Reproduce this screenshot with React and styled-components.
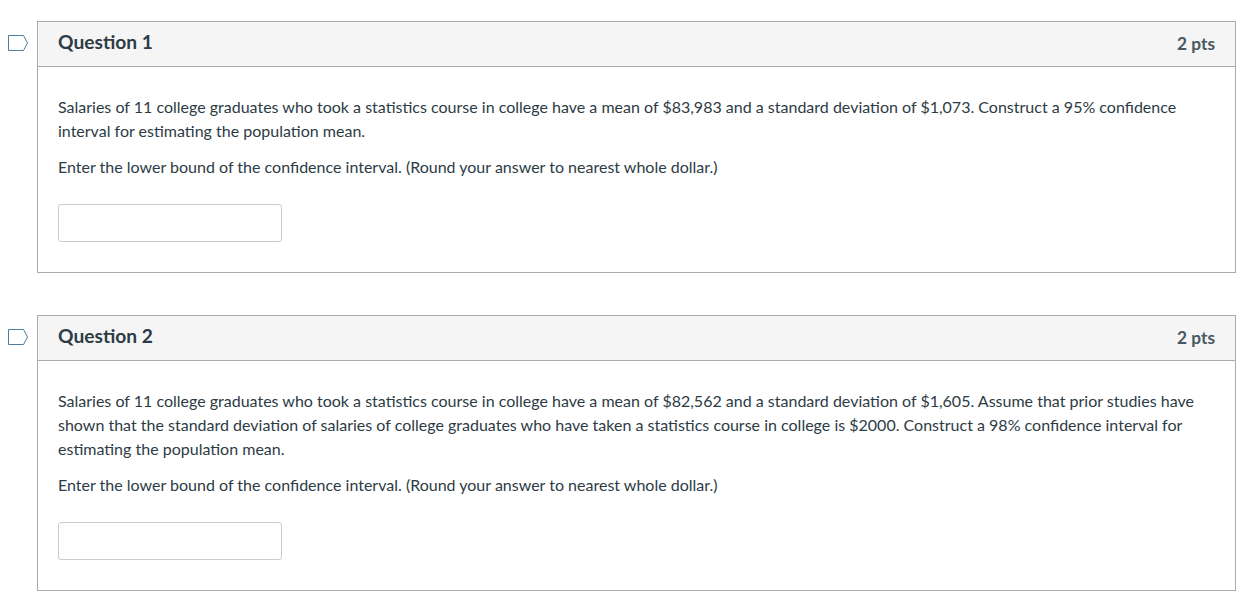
import styled, { createGlobalStyle } from "styled-components";

const questions = [
  {
    title: "Question 1",
    points: "2 pts",
    text: "Salaries of 11 college graduates who took a statistics course in college have a mean of $83,983 and a standard deviation of $1,073. Construct a 95% confidence interval for estimating the population mean.",
  },
  {
    title: "Question 2",
    points: "2 pts",
    text: "Salaries of 11 college graduates who took a statistics course in college have a mean of $82,562 and a standard deviation of $1,605. Assume that prior studies have shown that the standard deviation of salaries of college graduates who have taken a statistics course in college is $2000. Construct a 98% confidence interval for estimating the population mean.",
  },
];

function Flag() {
  return (
    <FlagIcon width="20" height="16" viewBox="0 0 20 16">
      <path d="M0.5 0.5H15.5L19.5 8L15.5 15.5H0.5Z" fill="none" stroke="#4b7f9c" />
    </FlagIcon>
  );
}

export default function App() {
  return (
    <>
      <GlobalStyle />
      <Page>
        {questions.map((q) => (
          <Row key={q.title}>
            <FlagCol>
              <Flag />
            </FlagCol>
            <Card>
              <Header>
                <Title>{q.title}</Title>
                <Points>{q.points}</Points>
              </Header>
              <Body>
                <Para>{q.text}</Para>
                <Para>
                  Enter the lower bound of the confidence interval. (Round your
                  answer to nearest whole dollar.)
                </Para>
                <Answer type="text" />
              </Body>
            </Card>
          </Row>
        ))}
      </Page>
    </>
  );
}

const GlobalStyle = createGlobalStyle`
  html, body {
    margin: 0;
    padding: 0;
    background: #fff;
    font-family: Lato, "Liberation Sans", sans-serif;
    color: #2d3b45;
  }
`;

const Page = styled.div`
  display: flex;
  flex-direction: column;
  gap: 42px;
  padding: 21px 21px 0 0;
`;

const Row = styled.div`
  display: flex;
`;

const FlagCol = styled.div`
  width: 37px;
  flex-shrink: 0;
  padding: 14px 0 0 8px;
  box-sizing: border-box;
`;

const FlagIcon = styled.svg`
  display: block;
`;

const Card = styled.section`
  flex: 1;
  border: 1px solid #aaa;
  box-sizing: border-box;
`;

const Header = styled.div`
  display: flex;
  align-items: center;
  justify-content: space-between;
  height: 45px;
  box-sizing: border-box;
  padding: 0 20px;
  background: #f5f5f5;
  border-bottom: 1px solid #aaa;
`;

const Title = styled.h2`
  margin: 0 0 4px;
  font-size: 19.2px;
  font-weight: 700;
  line-height: 40px;
  color: #2d3b45;
`;

const Points = styled.div`
  font-size: 17.3px;
  font-weight: 700;
  margin-bottom: 2px;
  color: #4a5761;
`;

const Body = styled.div`
  padding: 28px 20px 30px;
`;

const Para = styled.p`
  margin: 0 0 12px;
  font-size: 16px;
  line-height: 24px;
  word-spacing: 0.03px;
  color: #2d3b45;
`;

const Answer = styled.input`
  display: block;
  width: 224px;
  height: 38px;
  box-sizing: border-box;
  margin-top: 25px;
  border: 1px solid #c7cdd1;
  border-radius: 3px;
  background: #fff;
`;
